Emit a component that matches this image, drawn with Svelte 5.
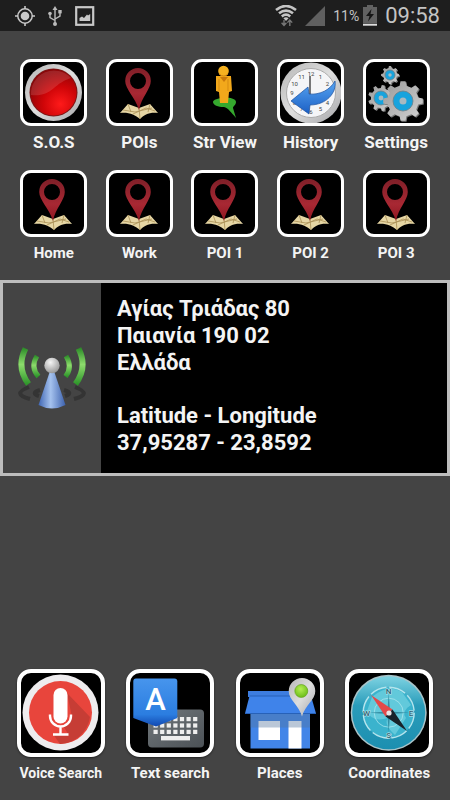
<script lang="ts">
type Shortcut = {
	label: string;
	icon: string;
	small?: boolean; // Long label, set one size down
};

const shortcuts: Shortcut[] = [
	{ label: 'S.O.S', icon: 'sos' },
	{ label: 'POIs', icon: 'pin' },
	{ label: 'Str View', icon: 'street' },
	{ label: 'History', icon: 'history' },
	{ label: 'Settings', icon: 'gears' },
];

const places: Shortcut[] = [
	{ label: 'Home', icon: 'pin' },
	{ label: 'Work', icon: 'pin' },
	{ label: 'POI 1', icon: 'pin' },
	{ label: 'POI 2', icon: 'pin' },
	{ label: 'POI 3', icon: 'pin' },
];

const searches: Shortcut[] = [
	{ label: 'Voice Search', icon: 'voice', small: true },
	{ label: 'Text search', icon: 'keyboard' },
	{ label: 'Places', icon: 'shop' },
	{ label: 'Coordinates', icon: 'compass' },
];

const address = ['Αγίας Τριάδας 80', 'Παιανία 190 02', 'Ελλάδα'];
const position = ['Latitude - Longitude', '37,95287 - 23,8592'];

const gears = [
	{ x: 27, y: 16, r: 9, hub: 5, teeth: 8 },
	{ x: 18, y: 39, r: 13, hub: 7, teeth: 9 },
	{ x: 40, y: 42, r: 20, hub: 10, teeth: 8 },
];

// Outline of a gear, four points per tooth
function gearPath(cx: number, cy: number, r: number, teeth: number): string {
	const points: string[] = [];
	const step = (Math.PI * 2) / teeth;
	for (let i = 0; i < teeth; i++) {
		const a = i * step;
		const corners = [[-0.28, 0.78], [-0.16, 1], [0.16, 1], [0.28, 0.78]];
		for (const [turn, reach] of corners) {
			const x = cx + Math.cos(a + turn * step) * r * reach;
			const y = cy + Math.sin(a + turn * step) * r * reach;
			points.push(`${x.toFixed(1)} ${y.toFixed(1)}`);
		}
	}
	return `M${points.join('L')}Z`;
}

const clockNumbers = Array.from({ length: 12 }, (_, i) => {
	const a = ((i + 1) * Math.PI) / 6;
	return { n: i + 1, x: 34 + Math.sin(a) * 19, y: 35 - Math.cos(a) * 19 };
});

// Keyboard keys, the first row is partly hidden by the letter card
const keys: { x: number; y: number }[] = [];
for (let row = 0; row < 3; row++) {
	for (let col = 0; col < 7; col++) {
		keys.push({ x: 27.5 + col * 6.6, y: 48 + row * 6.4 });
	}
}
</script>

{#snippet smallIcon(name: string)}
	<svg viewBox="3 3 61 61" aria-hidden="true">
		{#if name === 'sos'}
			<circle cx="33.5" cy="33.5" r="28.5" fill="url(#steel)" />
			<circle cx="33.5" cy="33.5" r="24" fill="#7d1515" />
			<circle cx="33.5" cy="33.5" r="23" fill="url(#redGlow)" />
			<path d="M11 36A23 23 0 0 1 51 19C42 22 39 25 34 29C27 35 21 37 11 36Z" fill="#fff" opacity=".13" />
		{:else if name === 'pin'}
			<path d="M14 54L22 45L33 49L44 45L52 54C43 53 38 56 34 60C29 56 23 53 14 54Z" fill="#e6d6a4" />
			<path d="M22 45L25 53M44 45L42 53M33 49L34 60M17 51L29 53L46 49M27 55L40 49L49 52" stroke="#a98f55" stroke-width=".8" fill="none" />
			<path
				d="M32 9A12.8 12.8 0 0 0 19.2 22C19.2 30 29 38 33 51C35.5 38 44.8 30 44.8 22A12.8 12.8 0 0 0 32 9ZM32 14A8 8 0 1 1 32 30A8 8 0 1 1 32 14Z"
				fill="url(#pinRed)"
				fill-rule="evenodd"
			/>
		{:else if name === 'street'}
			<path d="M33 39C39 38 45 40 45 43C45 46 42 47 42 49L45 59C40 53 37 49 33 48C27 48 22 46 22 43C22 41 27 39 33 39Z" fill="#35a82e" />
			<path d="M25 17H40L41 32L38 33L37 44H29L28 33L25 32Z" fill="#f2a81b" />
			<path d="M29 18L33 23L37 18Z" fill="#c9790c" />
			<path d="M28 20V32M37 20V32" stroke="#d58b12" stroke-width="1" fill="none" />
			<circle cx="32.5" cy="12" r="5.3" fill="#f5b120" />
			<path d="M28 15Q33 19 37 15" stroke="#d08310" stroke-width="1" fill="none" />
		{:else if name === 'history'}
			<circle cx="34" cy="34" r="30.5" fill="url(#steel)" />
			<circle cx="34" cy="34" r="24.5" fill="#f5f5f7" stroke="#aaa" />
			<g font-size="6" font-weight="400" text-anchor="middle" fill="#444">
				{#each clockNumbers as c}
					<text x={c.x} y={c.y + 1}>{c.n}</text>
				{/each}
			</g>
			<path d="M33 17V36" stroke="#222" stroke-width="1.2" />
			<path d="M14 42L31 28L32 35C43 36 53 31 58 22C60 34 49 46 33 46L32 55Z" fill="url(#arrowBlue)" stroke="#1a4f9e" stroke-width=".7" />
		{:else if name === 'gears'}
			{#each gears as g}
				<path d={gearPath(g.x + 1, g.y + 1, g.r, g.teeth)} fill="#777" />
				<path d={gearPath(g.x, g.y, g.r, g.teeth)} fill="url(#gearGray)" />
				<circle cx={g.x} cy={g.y} r={g.hub} fill="#17a3dd" stroke="#6d7f87" stroke-width=".8" />
				<circle cx={g.x} cy={g.y} r={g.hub * 0.35} fill="#a9b9c0" />
			{/each}
		{/if}
	</svg>
{/snippet}

{#snippet largeIcon(name: string)}
	<svg viewBox="4 4 80 80" aria-hidden="true">
		{#if name === 'voice'}
			<circle cx="43.5" cy="43.5" r="38" fill="#eeecee" />
			<circle cx="43.5" cy="43.5" r="31.5" fill="#e8453c" />
			<path d="M50 24L73 48A31.5 31.5 0 0 1 43 75L36 65H51L47 58L55 48Z" fill="#c63d35" />
			<rect x="36.5" y="19" width="14" height="35.5" rx="7" fill="#fff" />
			<path d="M33 45.5V47A10.5 10.5 0 0 0 54 47V45.5M43.5 58V65M36 65.5H51.5" fill="none" stroke="#fff" stroke-width="2.4" />
		{:else if name === 'keyboard'}
			<rect x="22" y="40.5" width="56" height="38" rx="4" fill="url(#keysGray)" />
			{#each keys as k}
				<rect x={k.x} y={k.y} width="4.2" height="4.2" fill="#eee" />
			{/each}
			<rect x="35" y="67" width="29" height="4.4" fill="#eee" />
			<path d="M10 9.5H48.5Q51.3 9.5 51.3 12.5V49L30 57.5L7.3 49V12.5Q7.3 9.5 10 9.5Z" fill="url(#cardBlue)" />
			<text x="29.5" y="41" font-size="31" font-weight="500" text-anchor="middle" fill="#fff">A</text>
		{:else if name === 'shop'}
			<rect x="12" y="22" width="61" height="6" fill="#3d7de0" />
			<rect x="14.5" y="44" width="59.5" height="35.5" fill="#4285e8" />
			<rect x="22.5" y="52" width="21.5" height="19" fill="#fff" />
			<rect x="52.5" y="52" width="13" height="27.5" fill="#fff" />
			<rect x="14.5" y="44" width="59.5" height="14.5" fill="#53729c" opacity=".4" />
			<path d="M13.5 27H75L80 44.5H9Z" fill="#3f83ea" />
			<path d="M13.5 27H75M9 44.5H80" stroke="#2761b8" stroke-width="1.2" />
			<path d="M66 9A13.3 13.3 0 0 0 52.7 22C52.7 31 63 36 66 47.5C69 36 79.3 31 79.3 22A13.3 13.3 0 0 0 66 9Z" fill="url(#steel)" />
			<circle cx="65.3" cy="22" r="6.5" fill="url(#greenDot)" stroke="#5b9c12" stroke-width=".6" />
		{:else if name === 'compass'}
			<circle cx="43.7" cy="43.7" r="38" fill="#a9c3c8" />
			<circle cx="43.7" cy="43.7" r="36.5" fill="url(#compassRim)" />
			<circle cx="43.7" cy="43.7" r="25.5" fill="#3bb3cd" stroke="#b4e4ec" stroke-width="1.4" stroke-dasharray="17 3" />
			<path d="M27 28Q43 14 57 23L66 36Q56 42 61 49L50 66Q38 55 43 49Q27 54 22 42Z" fill="#7dd7e4" opacity=".6" />
			<circle cx="43.7" cy="43.7" r="14.5" fill="none" stroke="#b5e9f0" stroke-width=".7" />
			<path d="M43.7 24L45 42.4L64 43.7L45 45L43.7 64L42.4 45L24 43.7L42.4 42.4Z" fill="#297f96" opacity=".8" />
			<g font-size="8" font-weight="500" text-anchor="middle" fill="#2f5f70" stroke="#bfe8ef" stroke-width="1" paint-order="stroke">
				<text x="43.7" y="25">N</text>
				<text x="66" y="46.5">E</text>
				<text x="43.7" y="69">S</text>
				<text x="21.5" y="46.5">W</text>
			</g>
			<path d="M26 26L47.5 40.5L40.5 47.5Z" fill="#e2494a" />
			<path d="M62 62L47.5 40.5L40.5 47.5Z" fill="#19232a" />
			<circle cx="44" cy="44" r="2.6" fill="#e8e4e4" />
		{/if}
	</svg>
{/snippet}

{#snippet shortcut(item: Shortcut, large: boolean)}
	<button class="item">
		<span class="tile" class:large>
			{#if large}
				{@render largeIcon(item.icon)}
			{:else}
				{@render smallIcon(item.icon)}
			{/if}
		</span>
		<span class="label" class:small={item.small}>{item.label}</span>
	</button>
{/snippet}

<!-- Gradients shared by all icons -->
<svg class="defs" aria-hidden="true">
	<defs>
		<linearGradient id="steel" x1="0" y1="0" x2="1" y2="1">
			<stop offset="0" stop-color="#b5b5b5" />
			<stop offset=".5" stop-color="#dedede" />
			<stop offset="1" stop-color="#a5a5a8" />
		</linearGradient>
		<radialGradient id="redGlow" cx=".65" cy=".75" r=".75">
			<stop offset="0" stop-color="#ff1a1a" />
			<stop offset=".5" stop-color="#cf0508" />
			<stop offset="1" stop-color="#8c0306" />
		</radialGradient>
		<linearGradient id="pinRed" x1="0" y1="0" x2="0" y2="1">
			<stop offset="0" stop-color="#7f1f28" />
			<stop offset=".6" stop-color="#a82833" />
			<stop offset="1" stop-color="#8d1620" />
		</linearGradient>
		<linearGradient id="arrowBlue" x1="0" y1="0" x2="0" y2="1">
			<stop offset="0" stop-color="#58a5f2" />
			<stop offset="1" stop-color="#1b5fc4" />
		</linearGradient>
		<linearGradient id="gearGray" x1="0" y1="0" x2="1" y2="1">
			<stop offset="0" stop-color="#999" />
			<stop offset="1" stop-color="#d4d4d4" />
		</linearGradient>
		<linearGradient id="keysGray" x1="0" y1="0" x2="1" y2="1">
			<stop offset="0" stop-color="#72787c" />
			<stop offset="1" stop-color="#4b5156" />
		</linearGradient>
		<linearGradient id="cardBlue" x1="0" y1="0" x2="0" y2="1">
			<stop offset="0" stop-color="#4795ed" />
			<stop offset=".75" stop-color="#2b7de0" />
			<stop offset="1" stop-color="#1148b0" />
		</linearGradient>
		<radialGradient id="greenDot" cx=".45" cy=".35" r=".6">
			<stop offset="0" stop-color="#b4ee52" />
			<stop offset="1" stop-color="#70c01c" />
		</radialGradient>
		<linearGradient id="compassRim" x1="0" y1="0" x2="0" y2="1">
			<stop offset="0" stop-color="#7ed3e2" />
			<stop offset=".4" stop-color="#2a9cba" />
			<stop offset="1" stop-color="#1c8fb0" />
		</linearGradient>
		<linearGradient id="wave" x1="0" y1="0" x2="0" y2="1">
			<stop offset="0" stop-color="#2f8f2a" />
			<stop offset=".45" stop-color="#8ddc6c" />
			<stop offset="1" stop-color="#2f962b" />
		</linearGradient>
		<linearGradient id="cone" x1="0" y1="0" x2="1" y2="0">
			<stop offset="0" stop-color="#3f66b4" />
			<stop offset=".45" stop-color="#a5c2ee" />
			<stop offset="1" stop-color="#3c61ad" />
		</linearGradient>
		<radialGradient id="ball" cx=".4" cy=".3" r=".7">
			<stop offset="0" stop-color="#f5f5f5" />
			<stop offset="1" stop-color="#999" />
		</radialGradient>
	</defs>
</svg>

<div class="app">
	<header class="status">
		<svg width="20" height="20" viewBox="0 0 20 20" aria-hidden="true">
			<circle cx="10" cy="10" r="4.3" fill="#c8c8c8" />
			<circle cx="10" cy="10" r="7.2" fill="none" stroke="#c8c8c8" stroke-width="1.5" />
			<path d="M10 0V3M10 17V20M0 10H3M17 10H20" stroke="#c8c8c8" stroke-width="1.6" />
		</svg>
		<svg width="14" height="20" viewBox="0 0 14 20" aria-hidden="true">
			<path d="M7 3V18M7 14.5L2 11.5V7M7 13L12 10V6" fill="none" stroke="#bbb" stroke-width="1.4" />
			<path d="M7 0L9.5 4H4.5Z" fill="#bbb" />
			<circle cx="7" cy="18" r="2" fill="#bbb" />
			<circle cx="2" cy="7.5" r="1.8" fill="#bbb" />
			<rect x="10.3" y="4" width="3.4" height="3.4" fill="#bbb" />
		</svg>
		<svg width="20" height="20" viewBox="0 0 20 20" aria-hidden="true">
			<rect x="1.2" y="1.2" width="17" height="17.6" fill="none" stroke="#c8c8c8" stroke-width="2.2" />
			<path d="M4.5 15V12L7 10.5L9 12L12 8.5L13 9.5L15.2 8V15Z" fill="#c8c8c8" />
		</svg>
		<svg class="wifi" width="22" height="22" viewBox="0 0 22 22" aria-hidden="true">
			<path d="M1 5Q11-3 21 5M4 8.3Q11 2.8 18 8.3M6.8 11.4Q11 8 15.2 11.4" fill="none" stroke="#c4c4c4" stroke-width="2.6" />
			<path d="M8.4 13.2Q11 11.3 13.6 13.2L11 16Z" fill="#c4c4c4" />
			<path d="M9 15V20M6.6 17.8L9 20.5L11.4 17.8M14.8 21V15.5M12.4 17.6L14.8 15L17.2 17.6" fill="none" stroke="#777" stroke-width="1.4" />
		</svg>
		<svg width="20" height="20" viewBox="0 0 20 20" aria-hidden="true">
			<path d="M20 0V20H0Z" fill="#606060" />
		</svg>
		<span class="percent">11%</span>
		<svg class="battery" width="14" height="21" viewBox="0 0 14 21" aria-hidden="true">
			<path d="M4 0H10V2H14V18H0V2H4Z" fill="#626262" />
			<path d="M8.5 4L3 11H6.5L5 16.5L11 9H7.5Z" fill="#161616" />
			<path d="M0 19.7H14" stroke="#ddd" stroke-width="2" />
		</svg>
		<time>09:58</time>
	</header>

	<nav class="row shortcuts">
		{#each shortcuts as item}
			{@render shortcut(item, false)}
		{/each}
	</nav>

	<nav class="row places">
		{#each places as item}
			{@render shortcut(item, false)}
		{/each}
	</nav>

	<section class="location">
		<div class="signal">
			<svg width="70" height="70" viewBox="0 0 70 70" aria-hidden="true">
				<g fill="none" stroke="#343434" stroke-width="4">
					<path d="M12 44Q-6 51 13 56M23 47Q13 50 22 53M58 44Q76 51 57 56M47 47Q57 50 48 53" />
				</g>
				<g fill="none" stroke="url(#wave)" stroke-width="6">
					<path d="M8.5 5.5Q-1 24 11.5 41M61.5 5.5Q71 24 58.5 41" />
				</g>
				<g fill="none" stroke="url(#wave)" stroke-width="5">
					<path d="M20 13Q13 24 21.5 33.5M49 13Q56 24 48.5 33.5" />
				</g>
				<path d="M33 28H37L48.5 62Q35 69 21.5 62Z" fill="url(#cone)" />
				<circle cx="35" cy="22.5" r="7.7" fill="url(#ball)" />
			</svg>
		</div>
		<div class="details">
			<address>
				{#each address as line}
					<span>{line}</span>
				{/each}
			</address>
			<div class="position">
				{#each position as line}
					<span>{line}</span>
				{/each}
			</div>
		</div>
	</section>

	<nav class="row searches">
		{#each searches as item}
			{@render shortcut(item, true)}
		{/each}
	</nav>
</div>

<style>
	:global(body) {
		background: #444;
	}

	.defs {
		position: absolute;
		width: 0;
		height: 0;
	}

	.app {
		display: flex;
		flex-direction: column;
		min-height: 100vh;
		box-sizing: border-box;
		padding-bottom: 15px;
		background: #444;
		color: #f4f4f4;
		font-family: Roboto, 'Noto Sans', sans-serif;
	}

	.status {
		display: flex;
		align-items: center;
		gap: 8px;
		height: 31px;
		padding: 0 10px 0 15px;
		background: #1e1e1e;
		color: #c4c4c4;
	}

	.status svg:nth-child(2) {
		margin: 0 5px;
	}

	.status .wifi {
		margin-left: auto;
	}

	.percent {
		font-size: 14px;
	}

	.battery {
		margin-left: -4px;
	}

	time {
		font-size: 22px;
	}

	.row {
		display: grid;
		grid-template-columns: repeat(5, 1fr);
		padding: 0 11px;
	}

	.shortcuts {
		margin-top: 28px;
	}

	.places {
		margin-top: 16px;
	}

	.searches {
		grid-template-columns: repeat(4, 1fr);
		margin-top: auto;
		padding: 0 6px;
	}

	.item {
		display: flex;
		flex-direction: column;
		align-items: center;
		gap: 4px;
		padding: 0;
		border: 0;
		background: none;
		color: inherit;
		font: inherit;
		font-weight: 700;
		cursor: pointer;
	}

	.tile {
		box-sizing: border-box;
		width: 67px;
		height: 67px;
		overflow: hidden;
		border: 3px solid #fff;
		border-radius: 11px;
		background: #000;
	}

	.large {
		width: 88px;
		height: 88px;
		border-width: 4px;
		border-radius: 14px;
		box-shadow: 0 1px 2px #222;
	}

	.tile svg {
		display: block;
		width: 100%;
		height: 100%;
	}

	.label {
		font-size: 17px;
		line-height: 24px;
		white-space: nowrap;
	}

	.places .label,
	.searches .label {
		font-size: 15px;
	}

	.searches .small {
		font-size: 14px;
	}

	.location {
		display: flex;
		margin-top: 15px;
		border: 3px solid #bdbdbd;
		background: #000;
	}

	.signal {
		display: flex;
		align-items: center;
		justify-content: center;
		width: 98px;
		background: #444;
	}

	.details {
		flex: 1;
		display: flex;
		flex-direction: column;
		gap: 26px;
		padding: 12px 16px 17px;
		font-size: 22px;
		font-weight: 700;
		line-height: 27px;
	}

	address,
	.position {
		display: flex;
		flex-direction: column;
		font-style: normal;
	}
</style>
